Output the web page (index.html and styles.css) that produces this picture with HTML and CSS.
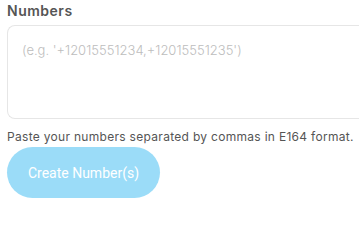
FILE: index.html
```html
<!DOCTYPE html>
<html>
<head>
<meta charset="utf-8">
<link rel="stylesheet" href="styles.css">
</head>
<body>
<div class="form">
  <label class="label" for="numbers">Numbers</label>
  <textarea id="numbers" class="field" placeholder="(e.g. '+12015551234,+12015551235')"></textarea>
  <p class="help">Paste your numbers separated by commas in E164 format.</p>
  <button class="btn" type="button">Create Number(s)</button>
</div>
</body>
</html>
```
FILE: styles.css
```css
html, body {
  margin: 0;
  padding: 0;
  background: #ffffff;
  overflow: hidden;
}
.form {
  display: flex;
  flex-direction: column;
  align-items: flex-start;
  padding: 0 0 0 7px;
  font-family: Inter, "Open Sans", sans-serif;
}
.label {
  font-size: 14px;
  font-weight: 600;
  letter-spacing: 0.5px;
  color: #555555;
  line-height: 20px;
  margin-top: 1px;
}
.field {
  box-sizing: border-box;
  width: 360px;
  height: 94px;
  margin-top: 4px;
  border: 1px solid #e6e6e6;
  border-right: none;
  border-radius: 8px 0 0 8px;
  padding: 16px 14px;
  font-family: Inter, "Open Sans", sans-serif;
  font-size: 13px;
  resize: none;
  outline: none;
}
.field::placeholder {
  color: #bdbdbd;
  font-weight: 300;
}
.help {
  margin: 10px 0 0 0;
  font-size: 12px;
  letter-spacing: 0.3px;
  line-height: 16px;
  color: #555555;
}
.btn {
  margin-top: 2px;
  width: 153px;
  height: 51px;
  border: none;
  border-radius: 26px;
  background: #9bdcf8;
  color: #ffffff;
  font-family: Roboto, sans-serif;
  font-size: 14px;
  padding: 0;
}
```
